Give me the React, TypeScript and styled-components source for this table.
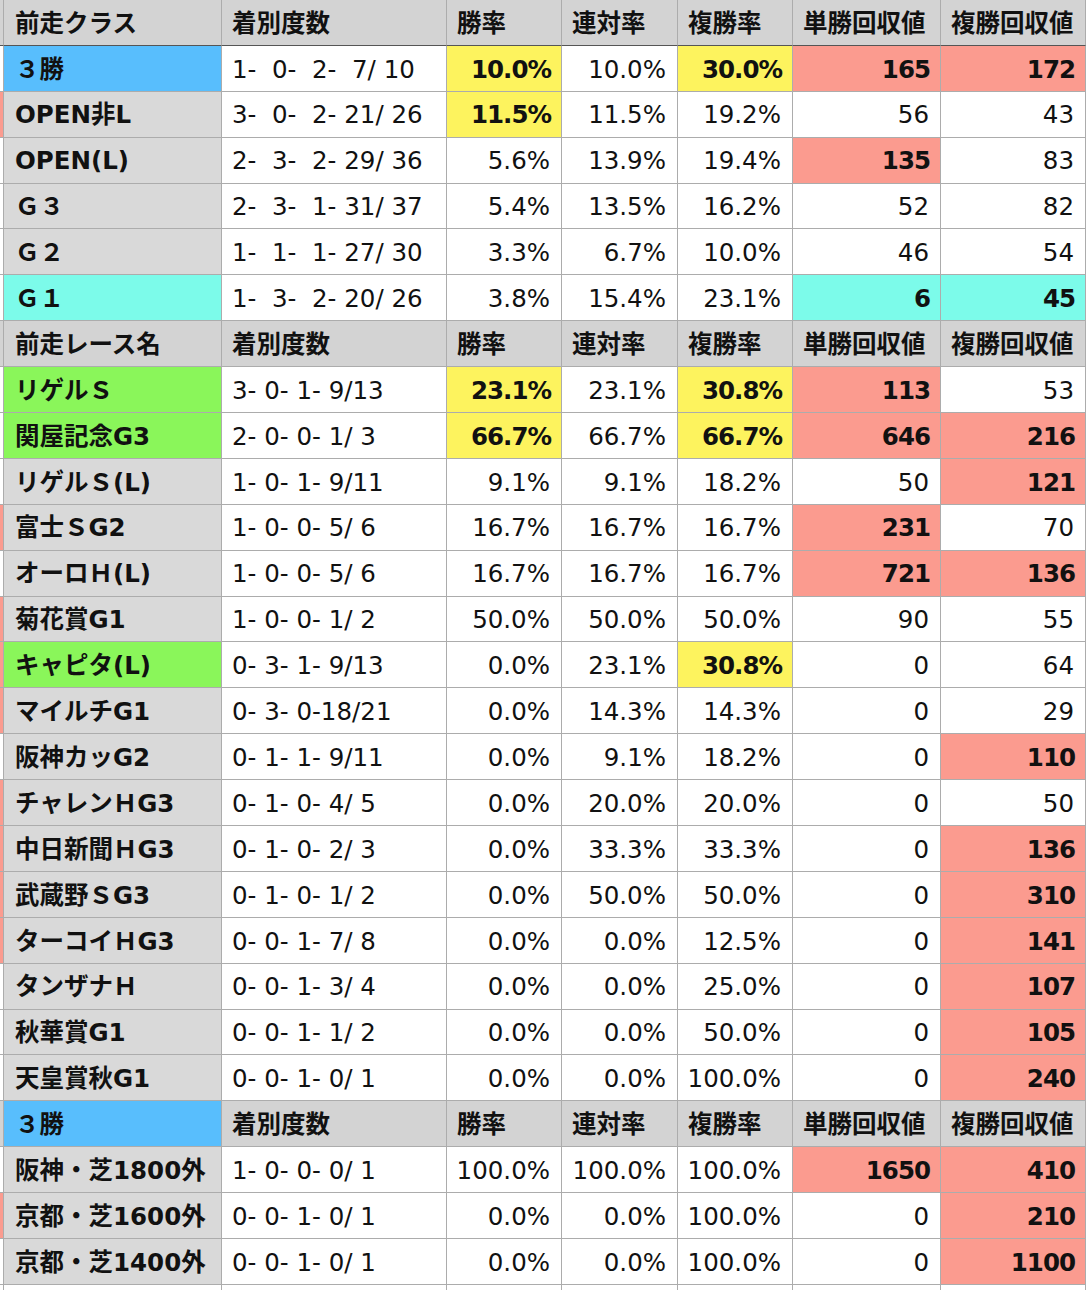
import styled, { createGlobalStyle } from 'styled-components'

const GlobalStyle = createGlobalStyle`
  html, body {
    margin: 0;
    padding: 0;
    background: #fff;
  }
  body {
    font-family: "DejaVu Sans", "Noto Sans CJK JP", sans-serif;
    color: #111;
  }
`

const COLORS: Record<string, string> = {
  y: '#fdf35e',
  p: '#fb9b8f',
  c: '#7cfbea',
  b: '#58befd',
  g: '#8af65a',
}

type Row = {
  head?: boolean
  label: string
  tone?: string
  edge?: boolean
  stat: string
  vals: string[]
  marks?: string
}

const HEAD = ['勝率', '連対率', '複勝率', '単勝回収値', '複勝回収値']

// marks: one char per value column, '.' = plain, y/p/c = highlighted + bold
const rows: Row[] = [
  { head: true, label: '前走クラス', stat: '着別度数', vals: HEAD },
  { label: '３勝', tone: 'b', stat: '1-  0-  2-  7/ 10', vals: ['10.0%', '10.0%', '30.0%', '165', '172'], marks: 'y.ypp' },
  { label: 'OPEN非L', edge: true, stat: '3-  0-  2- 21/ 26', vals: ['11.5%', '11.5%', '19.2%', '56', '43'], marks: 'y....' },
  { label: 'OPEN(L)', stat: '2-  3-  2- 29/ 36', vals: ['5.6%', '13.9%', '19.4%', '135', '83'], marks: '...p.' },
  { label: 'Ｇ３', stat: '2-  3-  1- 31/ 37', vals: ['5.4%', '13.5%', '16.2%', '52', '82'] },
  { label: 'Ｇ２', stat: '1-  1-  1- 27/ 30', vals: ['3.3%', '6.7%', '10.0%', '46', '54'] },
  { label: 'Ｇ１', tone: 'c', stat: '1-  3-  2- 20/ 26', vals: ['3.8%', '15.4%', '23.1%', '6', '45'], marks: '...cc' },
  { head: true, label: '前走レース名', stat: '着別度数', vals: HEAD },
  { label: 'リゲルＳ', tone: 'g', stat: '3- 0- 1- 9/13', vals: ['23.1%', '23.1%', '30.8%', '113', '53'], marks: 'y.yp.' },
  { label: '関屋記念G3', tone: 'g', stat: '2- 0- 0- 1/ 3', vals: ['66.7%', '66.7%', '66.7%', '646', '216'], marks: 'y.ypp' },
  { label: 'リゲルＳ(L)', stat: '1- 0- 1- 9/11', vals: ['9.1%', '9.1%', '18.2%', '50', '121'], marks: '....p' },
  { label: '富士ＳG2', edge: true, stat: '1- 0- 0- 5/ 6', vals: ['16.7%', '16.7%', '16.7%', '231', '70'], marks: '...p.' },
  { label: 'オーロＨ(L)', stat: '1- 0- 0- 5/ 6', vals: ['16.7%', '16.7%', '16.7%', '721', '136'], marks: '...pp' },
  { label: '菊花賞G1', edge: true, stat: '1- 0- 0- 1/ 2', vals: ['50.0%', '50.0%', '50.0%', '90', '55'] },
  { label: 'キャピタ(L)', tone: 'g', edge: true, stat: '0- 3- 1- 9/13', vals: ['0.0%', '23.1%', '30.8%', '0', '64'], marks: '..y..' },
  { label: 'マイルチG1', edge: true, stat: '0- 3- 0-18/21', vals: ['0.0%', '14.3%', '14.3%', '0', '29'] },
  { label: '阪神カッG2', stat: '0- 1- 1- 9/11', vals: ['0.0%', '9.1%', '18.2%', '0', '110'], marks: '....p' },
  { label: 'チャレンＨG3', edge: true, stat: '0- 1- 0- 4/ 5', vals: ['0.0%', '20.0%', '20.0%', '0', '50'] },
  { label: '中日新聞ＨG3', edge: true, stat: '0- 1- 0- 2/ 3', vals: ['0.0%', '33.3%', '33.3%', '0', '136'], marks: '....p' },
  { label: '武蔵野ＳG3', edge: true, stat: '0- 1- 0- 1/ 2', vals: ['0.0%', '50.0%', '50.0%', '0', '310'], marks: '....p' },
  { label: 'ターコイＨG3', edge: true, stat: '0- 0- 1- 7/ 8', vals: ['0.0%', '0.0%', '12.5%', '0', '141'], marks: '....p' },
  { label: 'タンザナＨ', stat: '0- 0- 1- 3/ 4', vals: ['0.0%', '0.0%', '25.0%', '0', '107'], marks: '....p' },
  { label: '秋華賞G1', stat: '0- 0- 1- 1/ 2', vals: ['0.0%', '0.0%', '50.0%', '0', '105'], marks: '....p' },
  { label: '天皇賞秋G1', stat: '0- 0- 1- 0/ 1', vals: ['0.0%', '0.0%', '100.0%', '0', '240'], marks: '....p' },
  { head: true, label: '３勝', tone: 'b', stat: '着別度数', vals: HEAD },
  { label: '阪神・芝1800外', stat: '1- 0- 0- 0/ 1', vals: ['100.0%', '100.0%', '100.0%', '1650', '410'], marks: '...pp' },
  { label: '京都・芝1600外', edge: true, stat: '0- 0- 1- 0/ 1', vals: ['0.0%', '0.0%', '100.0%', '0', '210'], marks: '....p' },
  { label: '京都・芝1400外', stat: '0- 0- 1- 0/ 1', vals: ['0.0%', '0.0%', '100.0%', '0', '1100'], marks: '....p' },
]

function App() {
  return (
    <>
      <GlobalStyle />
      <Table>
        {rows.map((r, i) => {
          const top = i === 0
          return [
            <Edge key={`e${i}`} $pink={!!r.edge} $top={top} $head={!!r.head} />,
            <Label key={`l${i}`} $tone={r.tone} $top={top} $head={!!r.head}>
              {r.label}
            </Label>,
            r.head ? (
              <HeadCell key={`s${i}`} $top={top}>{r.stat}</HeadCell>
            ) : (
              <Stat key={`s${i}`}>{r.stat}</Stat>
            ),
            ...r.vals.map((v, j) =>
              r.head ? (
                <HeadCell key={`v${i}-${j}`} $top={top}>{v}</HeadCell>
              ) : (
                <Num
                  key={`v${i}-${j}`}
                  $mark={r.marks && r.marks[j] !== '.' ? r.marks[j] : undefined}
                >
                  {v}
                </Num>
              )
            ),
          ]
        })}
        {/* start of the next, cropped row */}
        <Edge $pink={false} $top={false} $head={false} />
        <Blank />
        <Blank />
        <Blank />
        <Blank />
        <Blank />
        <Blank />
        <Blank />
      </Table>
    </>
  )
}

const Table = styled.div`
  display: grid;
  grid-template-columns: 4px 218px 225px 115px 116px 115px 148px 145px;
  grid-auto-rows: 45.9px;
  width: 1086px;
`

const cellBase = `
  box-sizing: border-box;
  display: flex;
  align-items: center;
  padding-top: 3px;
  border-right: 1px solid #acacac;
  border-bottom: 1px solid #acacac;
  font-size: 24.5px;
  line-height: 1;
  white-space: pre;
  overflow: hidden;
`

const Edge = styled.div<{ $pink: boolean; $top: boolean; $head: boolean }>`
  box-sizing: border-box;
  border-right: 1px solid #acacac;
  border-bottom: 1px solid ${(p) => (p.$top ? '#555' : '#acacac')};
  background: ${(p) => (p.$pink ? '#fb9b8f' : p.$head ? '#d3d3d3' : '#fff')};
`

const Label = styled.div<{ $tone?: string; $top: boolean; $head: boolean }>`
  ${cellBase}
  padding-left: 11px;
  font-weight: 700;
  background: ${(p) => (p.$tone ? COLORS[p.$tone] : p.$head ? '#d3d3d3' : '#d9d9d9')};
  border-bottom-color: ${(p) => (p.$top ? '#555' : '#acacac')};
`

const HeadCell = styled.div<{ $top: boolean }>`
  ${cellBase}
  padding-left: 10px;
  font-weight: 700;
  background: #d3d3d3;
  border-bottom-color: ${(p) => (p.$top ? '#555' : '#acacac')};
`

const Stat = styled.div`
  ${cellBase}
  padding-left: 10px;
  background: #fff;
`

const Num = styled.div<{ $mark?: string }>`
  ${cellBase}
  justify-content: flex-end;
  padding-right: ${(p) => (p.$mark ? 10 : 11)}px;
  background: ${(p) => (p.$mark ? COLORS[p.$mark] : '#fff')};
  font-weight: ${(p) => (p.$mark ? 700 : 400)};
  letter-spacing: ${(p) => (p.$mark ? '-1px' : '0')};
`

const Blank = styled.div`
  box-sizing: border-box;
  border-right: 1px solid #acacac;
  background: #fff;
`

export default App
